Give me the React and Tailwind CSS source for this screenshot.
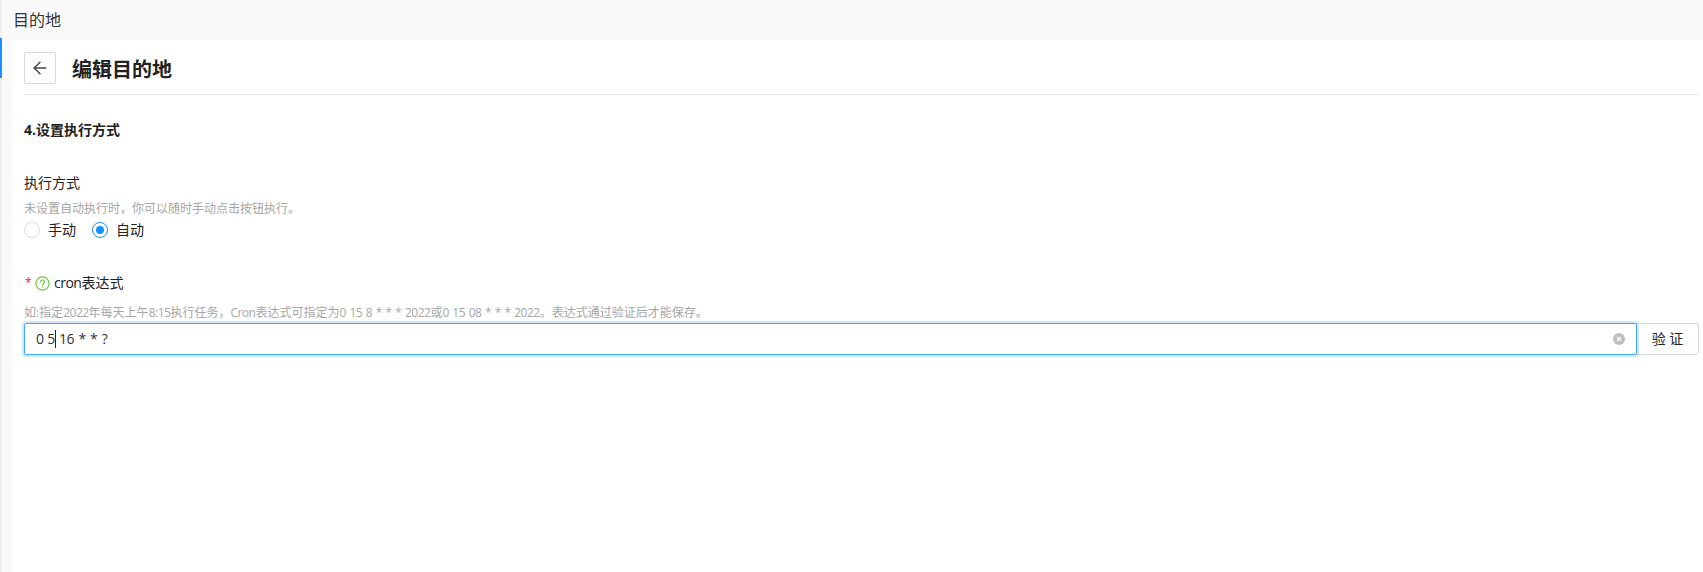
import { ArrowLeft } from 'lucide-react';

const FONT = "font-['Open_Sans','Noto_Sans_CJK_SC',sans-serif]";

function Radio({ label, checked }) {
  return (
    <label className="flex items-center">
      <span
        className={`flex h-4 w-4 items-center justify-center rounded-full border bg-white ${
          checked ? 'border-[#1890ff]' : 'border-[#d9d9d9]'
        }`}
      >
        {checked && <span className="h-2 w-2 rounded-full bg-[#1890ff]" />}
      </span>
      <span className="ml-2 text-sm leading-[22px] text-[#222]">{label}</span>
    </label>
  );
}

// Latin runs sit a little tighter than the CJK around them
function Latin({ children }) {
  return <span className="tracking-[-0.5px] [word-spacing:1px]">{children}</span>;
}

export default function App() {
  return (
    <div className={`flex h-[572px] w-full overflow-hidden bg-white ${FONT}`}>
      {/* Left edge with the active marker */}
      <div className="w-[2px] shrink-0 bg-[#eeeeee]">
        <div className="mt-[38px] h-10 w-[2px] bg-[#1890ff]" />
      </div>

      <div className="flex min-w-0 flex-1 flex-col bg-[#fafafa]">
        <div className="flex h-10 shrink-0 items-center pl-[11px] text-base text-[#333]">目的地</div>

        <main className="ml-[10px] flex-1 bg-white pl-3 pr-1">
          <div className="flex h-[55px] items-start border-b border-[#e8e8e8] pt-3">
            <button className="flex h-8 w-8 items-center justify-center rounded-[2px] border border-[#d9d9d9] bg-white text-[#444]">
              <ArrowLeft size={20} strokeWidth={1.7} />
            </button>
            <h1 className="ml-4 mt-[2px] text-xl font-bold leading-8 text-[#222]">编辑目的地</h1>
          </div>

          <h2 className="mt-[24px] text-sm font-bold leading-[22px] text-[#222]">4.设置执行方式</h2>

          <div className="mt-[31px] text-sm leading-[22px] text-[#222]">执行方式</div>
          <p className="mt-[6px] text-xs leading-[18px] text-[#a6a6a6]">未设置自动执行时，你可以随时手动点击按钮执行。</p>
          <div className="mt-px flex gap-[16px]">
            <Radio label="手动" />
            <Radio label="自动" checked />
          </div>

          <div className="mt-[31px] flex items-center text-sm leading-[22px] text-[#222]">
            <span className="ml-px w-[10px] text-xs text-[#f5222d]">*</span>
            <svg className="h-[15px] w-[15px]" viewBox="0 0 15 15" fill="none" stroke="#6cc24a" strokeWidth="1.2">
              <circle cx="7.5" cy="7.5" r="6.6" />
              <path d="M5.6 6a1.95 1.95 0 1 1 3 1.6c-.7.45-1.1.8-1.1 1.6" strokeLinecap="round" />
              <path d="M7.5 10.6v1" />
            </svg>
            <span className="ml-[4px]">
              <Latin>cron</Latin>表达式
            </span>
          </div>
          <p className="mt-[10px] text-xs leading-[18px] text-[#a6a6a6]">
            如:指定<Latin>2022</Latin>年每天上午<Latin>8:15</Latin>执行任务，<Latin>Cron</Latin>表达式可指定为
            <Latin>0 15 8 * * * 2022</Latin>或<Latin>0 15 08 * * * 2022</Latin>。表达式通过验证后才能保存。
          </p>

          <div className="mt-px flex h-8">
            <div className="relative flex flex-1 items-center rounded-[2px] border border-[#40a9ff] pl-[11px] text-sm text-[#333] shadow-[0_0_0_2px_rgba(24,144,255,0.2)]">
              <span className="tracking-[-0.2px]">0 5</span>
              <span className="h-[18px] w-px bg-[#222]" />
              <span className="ml-[3px] tracking-[-0.6px] [word-spacing:1.5px]">16 * * ?</span>
              <span className="absolute right-[11px] top-[9px] flex h-3 w-3 items-center justify-center rounded-full bg-[#bfbfbf]">
                <svg className="h-2 w-2" viewBox="0 0 8 8" stroke="#fff" strokeWidth="1.2">
                  <path d="M2 2l4 4M6 2L2 6" />
                </svg>
              </span>
            </div>
            <button className="-ml-px w-[63px] rounded-r-[2px] border border-[#d9d9d9] bg-white text-sm text-[#222]">验 证</button>
          </div>
        </main>
      </div>
    </div>
  );
}
